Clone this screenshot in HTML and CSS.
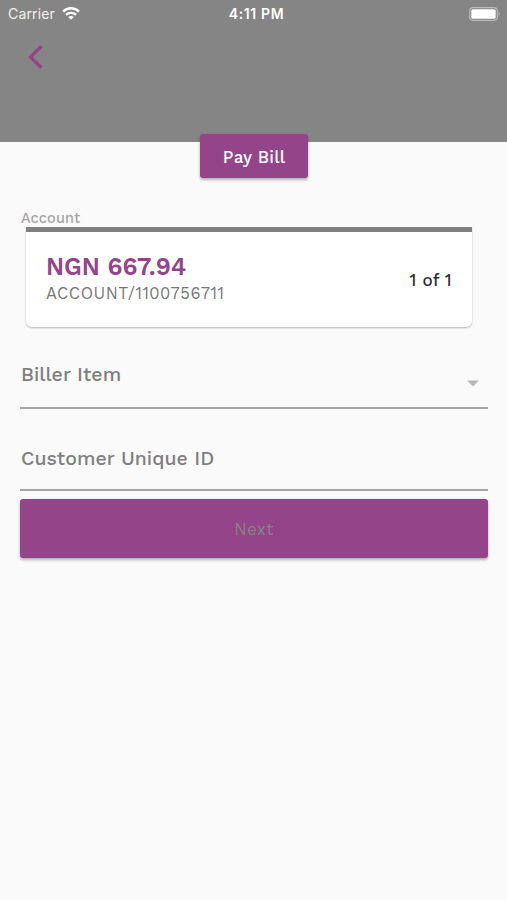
FILE: index.html
```html
<!DOCTYPE html>
<html lang="en">
<head>
<meta charset="utf-8">
<title>Pay Bill</title>
<link rel="stylesheet" href="styles.css">
</head>
<body>
<header class="header">
  <div class="status">
    <div class="carrier"><span class="carrier-name">Carrier</span>
      <svg class="wifi" width="18" height="13" viewBox="0 0 18 13" fill="none" stroke="#fff" stroke-width="2.4"><path d="M1.1 4.6C5.5.2 12.500.2 16.900 4.600M4 7.900C6.800 5.200 11.200 5.200 14 7.900"/><path d="M9 12.800 6.200 10Q9 7.900 11.800 10Z" fill="#fff" stroke="none"/></svg>
    </div>
    <span class="time">4:11 PM</span>
    <svg class="battery" width="32" height="14" viewBox="0 0 32 14"><rect x=".7" y=".7" width="27.600" height="12.600" rx="3.200" fill="none" stroke="#bbb" stroke-width="1.200"/><rect x="2.300" y="2.300" width="24.400" height="9.400" rx="1.500" fill="#fff"/><path d="M29.600 4.800q2 2.200 0 4.400z" fill="#bbb"/></svg>
  </div>
  <svg class="back" width="16" height="26" viewBox="0 0 16 26" fill="none" stroke="#944488" stroke-width="3.300"><path d="M14.500 2.200 3.500 13 14.500 23.800"/></svg>
</header>
<main class="content">
  <button class="pay">Pay Bill</button>
  <div class="label">Account</div>
  <section class="card">
    <div class="details">
      <div class="amount">NGN 667.94</div>
      <div class="number">ACCOUNT/1100756711</div>
    </div>
    <span class="count">1 of 1</span>
  </section>
  <div class="field biller"><span>Biller Item</span>
    <svg class="caret" width="12" height="7" viewBox="0 0 12 7"><path d="M0 .5h12L6 6.500z" fill="#b8b8b8"/></svg>
  </div>
  <div class="field customer"><span>Customer Unique ID</span></div>
  <button class="next">Next</button>
</main>
</body>
</html>
```
FILE: styles.css
```css
* { box-sizing: border-box; }
body { margin: 0; min-height: 900px; background: #fafafa; font-family: "Work Sans", Inter, sans-serif; }
button { border: 0; padding: 0; font-family: inherit; display: block; background: #944488; }
.header { height: 142px; background: #858585; }
.status { height: 27px; padding: 0 6px 0 8px; display: grid; grid-template-columns: 1fr auto 1fr; align-items: center; color: #fff; font-family: Inter, sans-serif; }
.carrier { display: flex; align-items: center; gap: 6px; font-size: 14px; letter-spacing: .15px; color: #f2f2f2; }
.carrier-name { width: 48px; line-height: 17px; }
.time { font-size: 14px; line-height: 17px; font-weight: 600; padding-left: 4px; letter-spacing: .6px; }
.battery { justify-self: end; }
.back { display: block; margin: 17px 0 0 27px; }
.content { padding: 0 19px 0 20px; }
.pay { width: 108px; height: 44px; margin: -8px auto 0 180px; padding-top: 1px; position: relative; border-radius: 3px; color: #fff; font-size: 17px; font-weight: 500; letter-spacing: .25px; box-shadow: 0 2px 3px rgba(0,0,0,.3); }
.label { height: 18px; margin-top: 31px; line-height: 20px; font-size: 14.5px; font-weight: 500; letter-spacing: .1px; color: #a5a5a5; padding-left: 1px; }
.card { height: 100px; margin: 0 16px 0 6px; padding: 0 20px 0 20px; display: flex; align-items: center; justify-content: space-between; background: #fff; border-top: 5px solid #808080; border-radius: 0 0 6px 6px; box-shadow: 0 1px 2px rgba(0,0,0,.28); }
.details { padding-top: 2px; }
.amount { height: 27px; line-height: 26px; font-size: 24.5px; font-weight: 600; color: #944488; }
.number { height: 26px; line-height: 26px; font-size: 16.5px; letter-spacing: .5px; color: #777; }
.count { font-size: 17px; font-weight: 500; letter-spacing: .3px; color: #333; }
.field { display: flex; justify-content: space-between; border-bottom: 2px solid #a5a5a5; padding-left: 1px; font-size: 19.5px; line-height: 26px; font-weight: 500; letter-spacing: .05px; color: #7f7f7f; }
.biller { height: 47px; margin-top: 35px; }
.customer { height: 45px; margin-top: 37px; }
.caret { margin: 18px 9px 0 0; }
.next { width: 100%; height: 59px; margin-top: 8px; border-radius: 3px; color: #858585; font-size: 17px; font-weight: 400; letter-spacing: .4px; box-shadow: 0 2px 3px rgba(0,0,0,.3); }
```
